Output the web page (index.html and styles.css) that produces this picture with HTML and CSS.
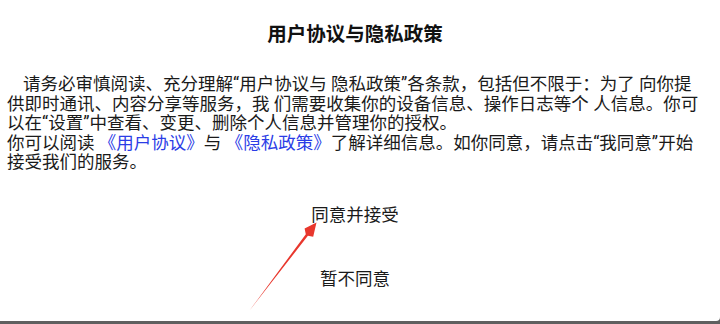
FILE: index.html
```html
<!DOCTYPE html>
<html lang="zh-CN">
<head>
<meta charset="utf-8">
<title>用户协议与隐私政策</title>
<link rel="stylesheet" href="styles.css">
</head>
<body>
<div class="dialog">
  <h1 class="title">用户协议与隐私政策</h1>
  <div class="content">
    <p class="para first">请务必审慎阅读、充分理解“用户协议与 隐私政策”各条款，包括但不限于：为了 向你提供即时通讯、内容分享等服务，我 们需要收集你的设备信息、操作日志等个 人信息。你可以在“设置”中查看、变更、删除个人信息并管理你的授权。</p>
    <p class="para">你可以阅读 <a class="link" href="#">《用户协议》</a>与 <a class="link" href="#">《隐私政策》</a>了解详细信息。如你同意，请点击“我同意”开始接受我们的服务。</p>
  </div>
  <div class="actions">
    <button class="btn" type="button">同意并接受</button>
    <button class="btn" type="button">暂不同意</button>
  </div>
  <svg class="arrow" width="80" height="100" viewBox="245 215 80 100" aria-hidden="true">
    <polygon points="249.5,310.5 305.8,234.2 304.6,228.6 316.5,222.5 313.2,236.8 307.9,235.8" fill="#e8372d"/>
  </svg>
</div>
</body>
</html>
```
FILE: styles.css
```css
html, body {
  margin: 0;
  padding: 0;
}
body {
  background: #5f5f5f;
  width: 720px;
  height: 324px;
  overflow: hidden;
  font-family: Roboto, "Noto Sans CJK SC", sans-serif;
  color: #1a1a1a;
}
.dialog {
  position: relative;
  box-sizing: border-box;
  height: 321px;
  background: #ffffff;
  border-bottom-right-radius: 4px;
  padding: 23px 17px 0 7px;
  display: flex;
  flex-direction: column;
}
.title {
  margin: 0;
  font-size: 19.5px;
  line-height: 24px;
  font-weight: 700;
  text-align: center;
  color: #111;
}
.content {
  margin-top: 28px;
  font-size: 17.5px;
  line-height: 19.5px;
}
.para {
  margin: 0;
}
.para.first {
  text-indent: 16px;
}
.link {
  display: inline-block;
  line-height: 19.5px;
  color: #2b3de6;
  text-decoration: none;
}
.actions {
  margin-top: 9px;
  display: flex;
  flex-direction: column;
}
.btn {
  height: 64px;
  border: 0;
  background: transparent;
  padding: 0;
  font-family: Roboto, "Noto Sans CJK SC", sans-serif;
  font-size: 17.5px;
  color: #1a1a1a;
  text-align: center;
}
.arrow {
  position: absolute;
  left: 245px;
  top: 215px;
}
```
